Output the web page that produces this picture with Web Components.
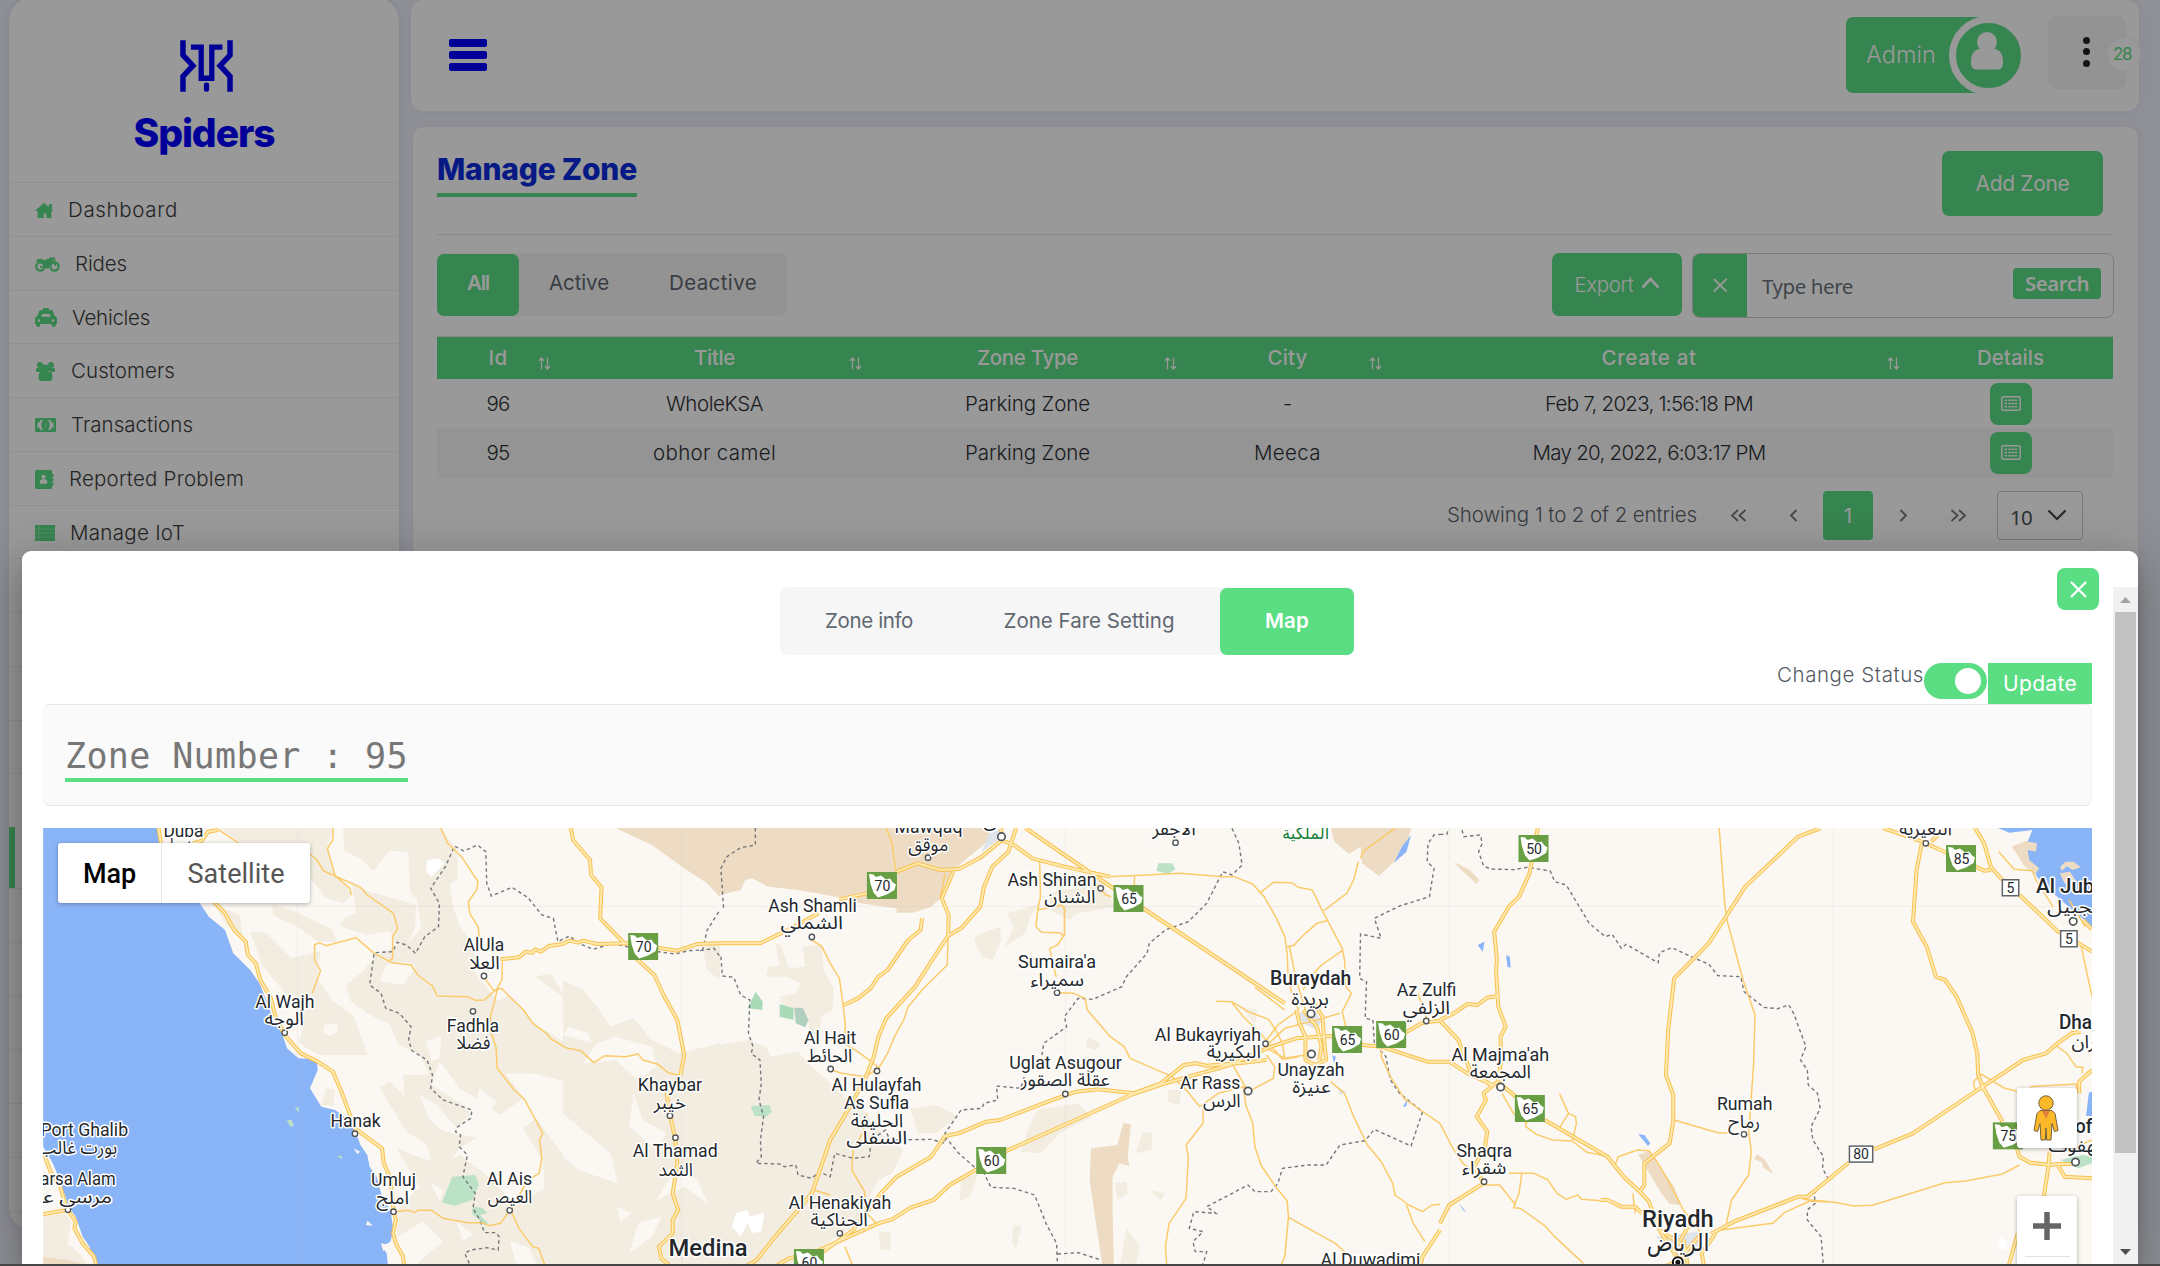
<!DOCTYPE html>
<html lang="en">
<head>
<meta charset="utf-8">
<title>Spiders - Manage Zone</title>
<style>
  html, body { margin: 0; height: 1266px; overflow: hidden; background: #eff1fb; }
  body { font-family: Inter, "Liberation Sans", sans-serif; font-size: 20.5px; font-weight: 300; color: #3a3f45; }
</style>
</head>
<body>
<spider-app></spider-app>
<script>
const GREEN = '#5bdd84';

function define(name, css, html, connected) {
  customElements.define(name, class extends HTMLElement {
    constructor() {
      super();
      this.attachShadow({ mode: 'open' });
    }
    connectedCallback() {
      if (this.shadowRoot.firstChild) return;
      const body = typeof html === 'function' ? html(this) : html;
      this.shadowRoot.innerHTML = `<style>*{box-sizing:border-box}:host{box-sizing:border-box}${css}</style>${body}`;
      if (connected) connected(this, this.shadowRoot);
    }
  });
}

/* Text that tracks its letters so that it takes exactly the width given in w. */
define('fit-text', `:host{display:inline-block;white-space:nowrap;line-height:1.2} span{display:inline-block}`,
  '<span><slot></slot></span>', (el, root) => {
    const w = +el.getAttribute('w');
    const span = root.querySelector('span');
    const natural = span.getBoundingClientRect().width;
    const n = el.textContent.length;
    if (w && natural) { span.style.letterSpacing = ((w - natural) / n) + 'px'; el.style.width = w + 'px'; }
  });

const ICONS = {
  home: [18, 15, '<path d="M9 0 14 4V1h3v5.5l1 1.2-1.6.6V15h-5v-4.500h-2.600V15H2.600V8.300L0 7.800z" fill="currentColor"/>'],
  bike: [25, 15, '<g fill="none" stroke="currentColor"><circle cx="5.300" cy="9.500" r="4.100" stroke-width="2.200"/><circle cx="19.500" cy="9.500" r="4.100" stroke-width="2.200"/><path d="M17 1.500h2.200L20.500 9M14.500 1.300h3.500" stroke-width="1.800"/></g><path d="M1.500 2.500 6 1.600l4 1.800 2-1.600h5l1.600 3.400-3.600 3-1.100 3.300H10L8.500 7.500 5 5.500 1.700 4.700zM5 9h6v1.800H5z" fill="currentColor"/>'],
  taxi: [22, 19, '<path fill-rule="evenodd" d="M8 0h6v2h2.200c1 0 1.500.5 1.800 1.400L19.500 8C21 8.300 22 9.400 22 11v5h-1.200v1.300c0 2.200-4 2.200-4 0V16H5.200v1.300c0 2.200-4 2.200-4 0V16H0v-5c0-1.600 1-2.700 2.500-3L4 3.400C4.300 2.500 4.800 2 5.800 2H8zM7.200 6 6.300 8.800h9.400L14.800 6zM4 11.200a1.300 1.300 0 1 0 .01 0zm14 0a1.300 1.300 0 1 0 .01 0z" fill="currentColor"/>'],
  users: [21, 19, '<g fill="currentColor"><circle cx="5" cy="3" r="3"/><circle cx="16" cy="3" r="3"/><circle cx="10.500" cy="6.500" r="4"/><path d="M2 6h6v4H3C.8 10 0 8 2 6zm17 0h-6v4h5c2.200 0 3-2 1-4zM6.500 9h8c2 .8 3 3 3 6.500 0 2.300-1 3.500-3 3.500h-8c-2 0-3-1.200-3-3.500C3.500 12 4.500 9.800 6.500 9z"/></g>'],
  money: [21, 14, '<rect width="21" height="14" rx="1" fill="currentColor"/><path d="M5 2.200h11a2.600 2.600 0 0 0 2.600 2.600v4.400A2.600 2.600 0 0 0 16 11.800H5a2.600 2.600 0 0 0-2.600-2.600V4.800A2.600 2.600 0 0 0 5 2.200z" fill="#fff"/><ellipse cx="10.500" cy="7" rx="4.200" ry="5.200" fill="currentColor"/><path d="M10.700 4.500v5" stroke="#fff" stroke-opacity=".6" stroke-width="1"/>'],
  book: [19, 19, '<path d="M2 0h13c1.500 0 2 .6 2 2v2h1.500v3H17v1.200h1.500v3H17v1.200h1.500v3H17V17c0 1.400-.5 2-2 2H2c-1.400 0-2-.6-2-2V2C0 .6.6 0 2 0z" fill="currentColor"/><circle cx="8.500" cy="6.800" r="2.100" fill="#fff"/><path d="M4.800 13.800v-1.600c0-3 1.800-2.900 3.700-2.900s3.700-.1 3.700 2.900v1.600z" fill="#fff"/>'],
  rack: [20, 16, '<path d="M0 0h20v16H0z" fill="currentColor"/><path d="M0 4h20M0 8h20M0 12h20M4 0v16" stroke="#fff" stroke-opacity=".35" stroke-width=".8"/>'],
  sort: [13, 13, '<path d="M3.500 12.500V1M1 3.800 3.500 1 6 3.800M9.500.5V12M7 9.200 9.500 12 12 9.200" fill="none" stroke="currentColor" stroke-width="1.300"/>'],
  list: [20, 15, '<rect x=".8" y=".8" width="18.400" height="13.400" rx="1.500" fill="none" stroke="currentColor" stroke-width="1.500"/><path d="M3.500 4.200H6m1.200 0h9.300M3.500 7.500H6m1.200 0h9.300M3.500 10.800H6m1.200 0h9.300" stroke="currentColor" stroke-width="1.500" stroke-dasharray="2.500 .7"/>'],
  up: [19, 12, '<path d="M1.500 10.500 9.500 2l8 8.500" fill="none" stroke="currentColor" stroke-width="2.600"/>'],
  down: [20, 12, '<path d="M1.500 1.500 10 10l8.500-8.500" fill="none" stroke="currentColor" stroke-width="2.200"/>'],
  x: [17, 17, '<path d="M1 1 16 16M16 1 1 16" fill="none" stroke="currentColor" stroke-width="2.300"/>'],
  first: [17, 13, '<path d="M8 1 2 6.500 8 12M15.500 1l-6 5.500 6 5.500" fill="none" stroke="currentColor" stroke-width="1.800"/>'],
  prev: [9, 13, '<path d="M7.500 1 2 6.500 7.500 12" fill="none" stroke="currentColor" stroke-width="1.800"/>'],
  next: [9, 13, '<path d="M1.500 1 7 6.500 1.500 12" fill="none" stroke="currentColor" stroke-width="1.800"/>'],
  last: [17, 13, '<path d="M1.500 1l6 5.500-6 5.500M9 1l6 5.500L9 12" fill="none" stroke="currentColor" stroke-width="1.800"/>'],
  person: [32, 38, '<circle cx="16" cy="10" r="10" fill="currentColor"/><path d="M8 17c-5 1-8 5.500-8 13 0 5 1.500 7.500 5.500 7.500h21c4 0 5.500-2.500 5.500-7.500 0-7.500-3-12-8-13z" fill="currentColor"/>']
};
define('ui-icon', ':host{display:inline-flex;flex:none} svg{display:block;overflow:visible}', el => {
  const [w, h, art] = ICONS[el.getAttribute('name')];
  const s = +(el.getAttribute('scale') || 1);
  return `<svg width="${w * s}" height="${h * s}" viewBox="0 0 ${w} ${h}">${art}</svg>`;
});

/* ---------- sidebar ---------- */
define('brand-logo', `:host{display:flex;flex-direction:column;align-items:center;flex:none;height:182px;padding:40px 0 0;color:#00f}
  svg{margin-left:5px;display:block} fit-text{font-size:39px;font-weight:800;line-height:47px;margin-top:17px;height:47px}`,
  `<svg width="53" height="52" viewBox="540 120 160 156"><g fill="none" stroke="currentColor"><path stroke-width="16.500" d="M549 120V165L579 197 549 229V276M691 120V165L661 197 691 229V276"/><path stroke-width="16" d="M573 141H604V235H636V141H668"/></g><rect x="612" y="248" width="16" height="28" rx="7" fill="currentColor"/></svg>
   <fit-text w="141">Spiders</fit-text>`);
define('nav-item', `:host{display:flex;align-items:center;gap:15px;height:53.75px;flex:none;padding:2px 0 0 26px;border-top:1px solid #f0f0f0;color:#3d3d3d}
  :host([active]){height:61px;border-left:6px solid ${GREEN};border-top:0} ui-icon{color:${GREEN}}`,
  el => el.hasAttribute('icon') ? `<ui-icon name="${el.getAttribute('icon')}"></ui-icon><fit-text w="${el.getAttribute('w')}">${el.textContent}</fit-text>` : '');
define('side-nav', `:host{display:flex;flex-direction:column;width:390px;height:1236px;margin-top:-4px;padding-top:4px;background:#fff;border-radius:26px;box-shadow:0 0 14px #d9dcea;overflow:hidden;flex:none}`,
  `<brand-logo></brand-logo>
   <nav-item icon="home" w="110">Dashboard</nav-item><nav-item icon="bike" w="52">Rides</nav-item>
   <nav-item icon="taxi" w="78">Vehicles</nav-item><nav-item icon="users" w="104">Customers</nav-item>
   <nav-item icon="money" w="122">Transactions</nav-item><nav-item icon="book" w="175">Reported Problem</nav-item>
   <nav-item icon="rack" w="115">Manage IoT</nav-item>` + '<nav-item></nav-item>'.repeat(5) + '<nav-item active></nav-item>' + '<nav-item></nav-item>'.repeat(7));

/* ---------- top bar ---------- */
define('user-chip', `:host{display:flex;align-items:center;width:183px;height:78px;margin-top:16px}
  .name{display:flex;align-items:center;width:140px;height:76px;background:${GREEN};border-radius:7px 0 0 7px;color:#fff;padding-left:20px;font-size:23.500px;flex:none}
  .ring{width:79px;height:79px;margin-left:-37px;border:7px solid #fff;border-radius:50%;background:${GREEN};color:#fff;display:flex;align-items:center;justify-content:center;padding:0 3px 8px 0;flex:none}`,
  '<div class="name"><fit-text w="70">Admin</fit-text></div><div class="ring"><ui-icon name="person"></ui-icon></div>');
define('more-button', `:host{display:flex;align-items:center;justify-content:center;position:relative;width:78px;height:73px;margin-top:16px;background:#f5f5f5;border-radius:8px}
  .dots{display:flex;flex-direction:column;gap:4.500px;margin:-2px 2px 0 0} i{width:7px;height:7px;border-radius:50%;background:#222}
  .badge{position:absolute;left:60px;top:22px;width:32px;height:32px;border-radius:50%;background:#fff;color:${GREEN};font-size:17px;font-weight:400;display:flex;align-items:center;justify-content:center;padding-right:4px;box-shadow:0 0 3px 1px #f1f6f3}`,
  '<div class="dots"><i></i><i></i><i></i></div><div class="badge"><fit-text w="18">28</fit-text></div>');
define('top-bar', `:host{display:flex;justify-content:space-between;width:1728px;height:111px;background:#fff;border-radius:12px;padding:0 13px 0 38px;box-shadow:0 0 10px #e2e5f1}
  .burger{display:flex;flex-direction:column;gap:4px;margin-top:39px} .burger i{width:38px;height:8px;border-radius:2px;background:#00f}
  .right{display:flex;gap:19px}`,
  '<div class="burger"><i></i><i></i><i></i></div><div class="right"><user-chip></user-chip><more-button></more-button></div>');

/* ---------- shared controls ---------- */
define('tab-strip', `:host{display:flex;background:#f6f6f6;border-radius:7px;width:max-content;font-weight:400;color:#5f6771;padding-top:1px}
  div{display:flex;align-items:center;justify-content:center;height:100%;border-radius:7px;padding-bottom:var(--lift,0)} .on{background:${GREEN};color:#fff;font-weight:600}`,
  el => JSON.parse(el.getAttribute('tabs')).map(([t, w, box, on]) => `<div class="${on ? 'on' : ''}" style="width:${box}px"><fit-text w="${w}">${t}</fit-text></div>`).join(''));
define('solid-button', `:host{display:flex;align-items:center;justify-content:center;background:${GREEN};color:#fff;border-radius:7px;flex:none}`, '<slot></slot>');

/* ---------- table ---------- */
define('search-box', `:host{display:flex;align-items:center;width:422px;height:65px;border:1px solid #ccc;border-radius:8px;overflow:hidden;font-family:"Noto Sans","Open Sans",sans-serif;font-weight:400;color:#6c757d;padding-right:12px}
  .clear{width:54px;height:100%;background:${GREEN};color:#fff;display:flex;align-items:center;justify-content:center;margin-right:15px}
  .ph{flex:1;padding-top:1px} solid-button{width:88px;height:31px;border-radius:4px;font-weight:600;margin-top:-4px}`,
  '<div class="clear"><ui-icon name="x" scale=".85"></ui-icon></div><div class="ph"><fit-text w="91">Type here</fit-text></div><solid-button><fit-text w="64">Search</fit-text></solid-button>');
const COLS = [['Id', 19, 122], ['Title', 41, 311], ['Zone Type', 101, 315], ['City', 40, 205], ['Create at', 95, 518], ['Details', 67, 205]];
define('zone-table', `:host{display:block;width:1676px;border-top:1px solid #e4e4e4}
  .row{display:grid;grid-template-columns:${COLS.map(c => c[2] + 'px').join(' ')};height:49px;color:#2d3035}
  .row.alt{background:#f7f7f7;height:50px}
  .row.head{height:42px;background:${GREEN};color:#fff;font-weight:500}
  .cell{display:grid;align-items:center;justify-items:center} .cell>*{grid-area:1/1}
  .cell>ui-icon[name=sort]{justify-self:end;margin:11px 8px 0 0}
  .row.first{padding-top:1px}
  solid-button{width:42px;height:42px;border-radius:8px;margin-top:-1px}`,
  () => {
    const rows = [
      [['96', 23], ['WholeKSA', 97], ['Parking Zone', 125], ['-', 9], ['Feb 7, 2023, 1:56:18 PM', 208]],
      [['95', 23], ['obhor camel', 123], ['Parking Zone', 125], ['Meeca', 67], ['May 20, 2022, 6:03:17 PM', 233]]
    ];
    return `<div class="row head">${COLS.map(([t, w], i) => `<div class="cell"><fit-text w="${w}">${t}</fit-text>${i < 5 ? '<ui-icon name="sort"></ui-icon>' : ''}</div>`).join('')}</div>` +
      rows.map((r, i) => `<div class="row ${i ? 'alt' : 'first'}">${r.map(([t, w]) => `<div class="cell"><fit-text w="${w}">${t}</fit-text></div>`).join('')}<div class="cell"><solid-button><ui-icon name="list"></ui-icon></solid-button></div></div>`).join('');
  });
define('page-nav', `:host{display:flex;align-items:center;justify-content:flex-end;height:49px;margin:13px 31px 0 0;color:#5d646c}
  ui-icon{color:#777} .s{width:33px} solid-button{width:50px;height:49px;border-radius:4px;margin:0 26px 0 25px;font-weight:400}
  .sel{display:flex;align-items:center;justify-content:space-between;width:86px;height:49px;border:1px solid #c8c8c8;border-radius:4px;padding:4px 15px 0 12px;margin-left:30px;font-family:"Noto Sans",sans-serif;font-weight:400;color:#495057} .sel ui-icon{color:#444;margin-top:-6px}`,
  `<fit-text w="250">Showing 1 to 2 of 2 entries</fit-text><i class="s"></i><ui-icon name="first"></ui-icon><i style="width:42px"></i><ui-icon name="prev"></ui-icon><solid-button>1</solid-button><ui-icon name="next"></ui-icon><i style="width:42px"></i><ui-icon name="last"></ui-icon><div class="sel"><fit-text w="22">10</fit-text><ui-icon name="down"></ui-icon></div>`);
define('zone-page', `:host{display:block;width:1725px;height:1105px;margin:16px 0 0 2px;background:#fff;border-radius:10px;padding:24px 24px 0;box-shadow:0 0 10px #e2e5f1}
  header{display:flex;justify-content:space-between;height:84px;border-bottom:1px solid #e3e3e3;padding-right:11px;width:1677px}
  h1{margin:0;height:46px;border-bottom:4px solid ${GREEN};font-size:30px;font-weight:800;color:#0a2bdd} h1 fit-text{line-height:37px}
  .add{width:161px;height:65px;font-weight:400;font-size:21px}
  .tools{display:flex;align-items:flex-start;height:101px;padding-top:18px}
  tab-strip{height:63px} .export{width:130px;height:63px;gap:7px;margin:0 10px 0 auto}`,
  `<header><h1><fit-text w="200">Manage Zone</fit-text></h1><solid-button class="add"><fit-text w="94">Add Zone</fit-text></solid-button></header>
   <div class="tools"><tab-strip style="--lift:3px" tabs='[["All",22,82,1],["Active",60,120],["Deactive",88,148]]'></tab-strip>
   <solid-button class="export"><fit-text w="59" style="margin-top:2px">Export</fit-text><ui-icon name="up" style="margin-top:-4px"></ui-icon></solid-button><search-box></search-box></div>
   <zone-table></zone-table><page-nav></page-nav>`);

/* ---------- map ---------- */
/* Geometry is kept in survey sheets: 0-2 are 720px wide slices of the map, 3 is the detailed west coast. */
const SX = 720 / 1568, SY = 1 / 3;
const px = (p, x) => p * 720 + x * SX, py = y => 780 + y * SY;
const sheet = p => p === 3 ? 'translate(43 828) scale(.33333)' : `translate(${p * 720} 780) scale(${SX} ${SY})`;
const AREAS = [
  [3, '#f2ede0', 'M530 0H870L852 60 875 140 930 200 900 225 850 210 800 150V45H590ZM900 0H1190L1240 60 1246 150 1220 170 1232 240 1252 300 1292 345 1300 440 1365 520 1400 500 1440 540 1480 590 1560 640V760L1480 738 1385 735 1420 780 1440 812 1370 860 1330 830 1250 780 1190 700 1165 770 1260 830 1283 860 1240 900 1180 830 1130 800 1160 880 1222 930 1180 950 1090 870 1080 740 1160 740 1130 680 1065 650 1040 590 980 560 922 520 910 470 960 430 1000 380 1100 340 1135 300 1120 210 1100 190 1096 72 1040 68 990 130 950 90 905 70ZM925 160 975 190 1030 205 1120 230 1115 300 1090 355 1060 350 1040 310 970 320 890 295 905 270 940 255ZM515 230 590 260 600 335 550 290ZM688 228 760 252 870 305 880 342 820 340 770 300 690 262ZM620 310 670 315 745 390 832 370 822 450 870 520 930 560 975 682 830 682 765 645 780 600 740 510 655 410 640 360Z'],
  [3, '#f2ede0', 'M1010 780 1040 758 1110 830 1200 910 1300 930 1250 960 1215 1010 1170 1010 1150 950 1090 910 1040 830ZM1060 960 1120 985 1200 1012 1250 980 1330 1040 1420 1130 1505 1080 1500 1000 1440 900 1480 870 1560 980V1308H1120L1200 1240 1140 1180 1060 1230 1070 1130 1130 1080ZM850 780 875 785 872 835 835 830Z'],
  [3, '#fbf8f3', 'M1010 460 1080 470 1120 420 1090 400 1030 410ZM1150 640 1195 625 1190 690 1165 700ZM845 590 880 585 885 610 860 625 842 612ZM1310 780 1360 820 1340 850 1300 815ZM1160 1060 1200 1090 1190 1120ZM1420 1040 1450 1080 1420 1100ZM1240 1180 1290 1220 1260 1240ZM1400 1240 1460 1260 1480 1308H1420ZM1430 350 1480 380 1520 470 1440 440Z'],
  [0, '#f2ede0', 'M1165 590 1200 580 1225 640 1226 600 1270 630 1300 680 1330 740 1380 715 1420 780 1480 820 1568 790V1460H1226V650ZM1530 500 1568 490V600L1540 570Z'],
  [0, '#fbf8f3', 'M1226 1000 1260 1040 1330 1120 1345 1210 1260 1170 1226 1130ZM1340 770 1420 800 1430 860 1390 900 1340 840 1270 850 1300 790ZM1380 940 1400 1020 1450 1060 1430 1110 1370 1040ZM1470 1170 1520 1200 1540 1270 1490 1220 1430 1260ZM1345 1280 1375 1300 1350 1325ZM1390 1330 1440 1310 1420 1370 1370 1420ZM1240 740 1280 760 1290 790 1226 765Z'],
  [0, '#fff', 'M930 240 955 235 968 250 940 290 928 275Z'],
  [0, '#eddcc3', 'M1340 144H1568V352L1540 310 1490 265 1420 195Z'],
  [0, '#8ab4f8', 'M94 144H345L355 240 435 370 455 410 490 450 508 520 545 570 565 610 580 660 595 720 614 760 625 805 650 835 690 838 692 870 675 925 700 980 730 990 760 1020 775 1060 785 1095 800 1125 805 1160 820 1190 832 1250 850 1290 857 1350 850 1385 832 1400 842 1420 845 1460H210L195 1400 180 1370 165 1310 150 1280 130 1200 115 1150 94 1100Z'],
  [0, '#f2ede0', 'M94 1312 140 1300 155 1325 147 1390 175 1425 195 1460H94Z'],
  [0, '#eddcc3', 'M94 1430 150 1441 190 1455V1460H94Z'],
  [0, '#fbf8f3', 'M800 1322 812 1337 797 1335ZM830 1390 858 1398 834 1412ZM770 1105 784 1115 778 1122Z'],
  [0, '#bbe2c6', 'M985 1190 1035 1185 1043 1215 1028 1260 990 1277 962 1268ZM1030 1280 1050 1283 1062 1300 1045 1305 1063 1330 1055 1335 1040 1315 1027 1300ZM625 1020 635 1020 640 1038 632 1040ZM642 985 650 980 651 997ZM733 1127 744 1128 745 1138Z'],
  [1, '#f2ede0', 'M0 795 60 780 100 800 110 830 170 815 200 860 240 910 275 960 320 1000 350 1060 400 1110 375 1180 345 1200 330 1240 300 1330 220 1400 150 1460H0ZM120 490 133 495 150 565 185 560 180 500 222 492 225 570 247 620 246 690 220 710 215 790 190 780 195 730 145 700 130 650 165 640 175 610 145 590 100 590 105 560 130 555ZM560 465 610 440 612 480 595 540 570 530 553 480ZM625 400 700 370 675 410 665 460 620 500 640 440ZM715 340 790 320 830 300 860 380 780 400 760 420 720 390ZM690 990 780 970 810 1010 740 1060 700 1120 655 1115 670 1050ZM415 985 470 975 520 1010 470 1060 430 1060ZM800 770 830 790 820 810 797 800ZM975 930 1005 930 1000 975 975 965ZM920 1055 942 1060 940 1110 905 1120ZM860 1210 885 1205 888 1240 865 1260ZM935 1230 970 1240 960 1260ZM885 1345 915 1400 905 1460H870ZM640 1335 657 1340 645 1405 635 1390ZM345 1355 372 1355 370 1410 350 1410ZM525 1200 562 1180 545 1250 522 1265ZM1135 680 1170 690 1165 735Z'],
  [1, '#eddcc3', 'M0 144H595L578 190 525 250 492 310 480 355 460 380 420 398H385L384 385 305 370 270 355 170 330 105 320 70 295 55 300 45 330 0 345ZM878 1030 895 1032 888 1130 892 1158 870 1150 855 1190 855 1300 858 1460H833L820 1340 805 1200 808 1105 865 1095ZM1330 144H1505L1492 215 1435 288 1398 250 1395 200 1370 222 1338 185Z'],
  [1, '#8ab4f8', 'M1505 165 1495 215 1468 248 1485 200ZM1333 825 1341 830 1338 852ZM1497 958 1495 978 1487 982Z'],
  [1, '#bbe2c6', 'M955 250H985L992 268 975 282 950 272ZM67 978 108 975 113 995 100 1010 75 1008Z'],
  [1, '#a9dbb9', 'M78 635 93 665 92 690 60 685ZM130 672 160 685 160 720 130 710Z'],
  [1, '#b1cfbf', 'M162 683 180 683 193 720 185 742 165 730Z'],
  [1, '#fff', 'M35 1300 60 1290 65 1310 97 1298 90 1355 70 1358 60 1330 45 1370 26 1340Z'],
  [1, '#dfe3ea', 'M1255 700 1290 690 1310 720 1300 750 1270 730ZM1345 925 1365 935 1350 945ZM590 150H612V175L570 215Z'],
  [2, '#8ab4f8', 'M1215 144H1420V440L1395 410 1360 370 1320 320 1300 290 1285 250 1275 200 1290 150 1240 158ZM82 495 97 485 93 515ZM144 525 152 530 154 563 147 560ZM432 1063 445 1065 458 1090 453 1098ZM42 1270 57 1297 50 1290ZM1413 938 1420 935V1008H1407Z'],
  [2, '#eddcc3', 'M1245 200 1275 183 1300 190 1298 215 1280 210 1283 240 1305 265 1295 285 1270 255 1258 225ZM1350 262 1362 245 1380 245 1395 262 1378 270 1365 258 1355 272ZM1350 280 1372 275 1388 310 1360 310ZM30 245 65 270 86 300 80 312 50 275ZM432 1125 455 1112 470 1140 510 1220 525 1275 500 1272 480 1235ZM690 1122 708 1140 726 1182 705 1165 700 1145 684 1138Z'],
  [2, '#bbe2c6', 'M1350 1140 1400 1125 1420 1130V1150L1390 1165Z'],
  [2, '#dfe3ea', 'M470 1370 560 1355 570 1400 540 1440 500 1410ZM1370 1150 1395 1145 1390 1160Z'],
  [2, '#fff', 'M1218 1370 1237 1385 1230 1410 1215 1405Z']
];
const MINOR = [
  [0, 'M725 144 725 180 713 205 730 288 762 325 765 345M675 222 690 240 705 273 730 288 785 322 800 345 857 400 866 445 855 470 855 535 848 543M680 640 698 572 685 540 685 495 695 488 710 497 775 473 815 520 853 548 895 555 910 585 942 618 952 648 1018 650 1035 661 1055 660 1083 625 1093 600 1094 545M475 148 520 190M960 144 975 190 1005 230 1041 305 1038 330 1020 365 1023 400 1041 440 1045 490M1056 595 1075 632 1092 625 1110 650 1140 690 1160 730 1190 760 1200 777 1232 803 1265 812 1293 848 1317 827 1362 830 1390 822 1400 840 1433 853 1455 878 1480 886M1083 628 1075 675 1068 710 1070 760 1080 800 1083 865 1120 930 1142 957 1182 1060 1175 1080 1180 1135 1174 1180 1150 1200 1112 1290 1130 1345 1160 1400 1173 1405 1188 1460M860 1295 890 1291 903 1298 910 1291 940 1291 965 1315 1020 1328 1050 1328 1065 1337 1090 1330 1110 1292'],
  [1, 'M362 144 375 190 383 275M200 480 222 500 240 550 260 595 268 675 273 735 270 790 300 815 342 858 340 870 315 890 265 880 243 870M696 240 698 350 692 390 688 440 700 457 740 458 748 468 735 495 718 505 724 545 732 590M750 380 750 465 748 468M690 390 745 375 752 395M810 300 840 345 852 350M845 290 930 285 1000 280 1050 285 1095 290 1120 290 1160 312 1185 350 1210 410 1230 470 1235 520 1237 580 1245 640 1260 690M1175 340 1205 307 1245 308 1260 322 1290 330 1313 395 1355 505 1360 540 1363 620 1375 640 1355 695M1250 495 1275 460 1300 430 1322 422M1235 500 1253 495M1390 245 1380 300 1365 340 1315 392M1355 512 1310 555 1280 600 1270 630M1395 235 1400 215 1470 145M903 285 902 315M497 450 495 555 440 630 410 680 400 720 380 770 365 820 345 865M490 280 480 355M735 638 770 640 795 655 800 690 850 770 880 800 893 835 985 890 1012 925 1045 980 1085 940 1140 920 1145 975 1160 1030 1165 1100 1178 1155 1210 1220 1235 1262 1238 1310 1230 1430 1220 1460M1052 980V1030L1015 1095 1020 1130 1015 1255 978 1330 970 1400 973 1460M1115 850 1150 935 1205 895 1208 860 1190 825M1080 664 1115 665 1150 695 1195 718 1210 750 1225 790 1230 838M1165 622 1230 690M1115 668 1140 710 1180 765 1225 838 1260 830M1188 785 1215 735 1260 690M1195 790 1230 745 1300 720 1350 700M1185 800 1230 835 1275 825M1330 905 1360 940 1380 1010 1410 1095 1440 1145 1465 1210 1470 1245 1500 1275 1530 1295 1550 1275 1568 1273M1440 810V830L1460 890 1490 955 1525 990 1568 1030M1495 1275 1510 1330 1535 1385M1238 1312 1340 1390 1380 1440M1355 695 1362 735 1355 760M320 1000 310 1060 290 1110 287 1170 315 1235 317 1295 340 1330M272 1400 290 1460M205 1230 240 1245M1520 640 1540 720M1240 500 1255 600 1275 690'],
  [2, 'M608 144 620 370 625 420 660 600 686 705 683 850 675 1010 672 1050 678 1115 672 1185 635 1260 622 1340M510 1020 605 1058 650 1060M1217 215 1250 268 1290 272 1300 305 1335 380M1395 490 1420 650M1165 930 1162 905 1178 882 1200 900 1230 925 1260 935M1285 920 1385 912 1388 935M1340 795 1365 820 1385 860 1400 862 1398 880M0 1030 30 1110 50 1150 72 1175M187 1030 187 1040 210 1063 245 1080 288 1083 320 1117 370 1130M260 940 280 1000 262 1040M280 1000 295 1010 297 1030 288 1083M135 940 160 1000 190 1030M150 1180 205 1180 235 1200 255 1240 275 1258 300 1245 308 1258 350 1262M178 1182 172 1240 160 1283 175 1285 228 1337 250 1370 312 1450M95 1215 130 1215 165 1275M420 1240 425 1300M380 1160 388 1130 430 1110 455 1112 475 1150 500 1210 530 1290 568 1358M612 1350 725 1330 750 1298 805 1263 860 1267 900 1278 942 1276 1100 1208 1145 1203 1225 1182 1262 1155M790 1258 850 1265M1385 1100 1420 1080M1370 360 1405 440']
];
const MAJOR = [
  [0, 'M345 144 352 200 360 250 440 330 490 400 510 450 535 485 540 525 557 550 567 600 590 655 600 710 620 765 655 820 692 845 725 875 745 940 773 1045 832 1105 836 1150 850 1195 857 1290 862 1320 856 1360 862 1390 878 1430 880 1460M420 190 440 182 453 155 475 150M1243 144 1248 180 1285 240 1287 285 1310 322 1307 415 1360 490M1090 538 1130 532 1145 515 1160 518 1165 508 1178 515 1195 498 1225 492 1240 482 1260 488 1270 482 1300 492 1368 490 1475 512 1520 492 1568 490M1385 535 1425 585 1445 645 1475 720 1490 825 1482 885M1450 920 1458 1000 1470 1072 1475 1150 1465 1240 1477 1290 1465 1320V1360L1435 1400 1440 1435 1460 1460M94 1115 110 1175 130 1215 145 1285 165 1325 162 1345 180 1390 205 1430 210 1460M94 1303 145 1290'],
  [1, 'M0 490H87L140 455 215 400M260 358 320 340M385 275 430 250 480 270 520 267 565 235 615 180M612 144 615 182 640 195 680 235 750 260 850 290M665 144 830 300 1230 670M645 144 628 215 593 260 575 320 567 380 525 445 497 467 455 555 425 620 362 715 345 770 335 830 315 900 270 1010 240 1080 215 1180 200 1240 170 1290 120 1370 80 1440 55 1460M508 275 483 355 498 405 497 465M440 415 437 450 410 480 365 570 345 590 328 625 300 655 270 675M490 1068 520 1060 580 1025 610 1020 720 962 775 935 825 928 900 940 960 910 1010 855 1035 850 1060 857 1140 848 1190 840M120 1460 150 1435 200 1420 345 1330 375 1318 415 1283 465 1260 500 1215 560 1168M620 1115 900 942 965 912 1110 855 1200 800 1255 775 1330 768 1400 795 1440 800 1540 845H1568M225 1415 290 1350 350 1240 385 1190 460 1130 490 1068M1255 690 1262 730 1275 770V840L1295 855 1320 840 1315 770 1312 710 1290 660M1270 690 1300 740 1310 800 1305 840M1490 760 1530 728 1568 722M1568 1350 1530 1430 1525 1460'],
  [2, 'M213 144 195 280 172 350 150 380 118 455 124 540 122 570 127 680 143 740 132 770V850L125 910M0 720 30 700 60 672 82 675 103 653 127 648M0 722 40 780 65 870 115 920M0 845H20L60 880 115 915M125 905 95 940 100 960 80 1010 103 1055 98 1100 75 1160 95 1210 20 1275 0 1330M125 905 170 955M228 1020 365 1130 400 1190 435 1235 455 1265 480 1355 520 1440M435 1235 445 1215 445 1150 500 1090 508 1025V945L492 885 497 750 510 595 585 490 665 320 780 170 828 145M350 1260 365 1260 395 1280H425L440 1300M965 144 1050 185 1090 210 1170 262 1185 272 1200 270M1070 185 1095 150M1165 144 1185 190 1200 262 1225 300M1050 185 1038 270 1030 425 1060 500 1080 590 1100 600 1125 650 1160 760 1170 820 1172 885 1182 920 1225 1025M1262 345 1350 460M1385 485 1420 515M1400 420 1420 448M945 1108 1030 1060 1182 920 1270 840 1320 820 1345 790 1375 760 1395 755M890 1148 840 1205 800 1250 780 1250 640 1325 590 1362M1255 1100 1262 1130 1285 1148 1330 1155 1345 1152 1375 1152M1345 1152 1360 1190 1420 1195M1328 1110 1325 1160 1315 1250M1258 1360 1238 1460M1420 870 1392 905V940M490 1460 520 1440 570 1360M480 1350 520 1390 540 1340M540 1460 530 1380M575 1460 570 1420 600 1360']
];
const BORDERS = [
  [0, 'M1022 1450 1012 1420 1025 1410 1060 1403 1085 1410 1087 1370 1080 1358 1055 1358 1045 1320 1030 1285 1035 1240 1008 1190 1018 1125 1000 1100 1003 1065 992 1055 997 1040 1025 1015 1028 990 965 960 938 925 942 885 930 840 897 812 890 780 895 740 870 700 840 685 830 640 805 615 815 518 855 515 865 487 885 495 905 520 925 470 955 440 957 370 938 325 970 260 990 198 1010 213 1040 195 1058 215 1060 310 1070 348 1115 322 1150 353 1180 405 1205 415 1215 485 1240 468 1260 490 1292 508 1335 490 1380 505 1470 522 1500 512 1530 510 1540 450 1568 390'],
  [0, 'M1525 512 1555 505 1568 530'],
  [1, 'M77 144V195L45 203 15 230 2 265 8 390M2 530 5 588 30 592 45 645 65 660 62 760 72 800 68 820 87 840 90 910 85 960 95 1010 88 1080 90 1130 78 1150 130 1152 140 1160 165 1155 170 1185 200 1195 215 1175 240 1190 250 1120 290 1135 325 1130 330 1080 360 1050 370 1080 460 1078 490 1090 490 1060 525 990 570 985 575 970 605 960 602 918 655 925 665 880 700 835 705 790 755 740 750 710 780 655 812 658 875 620 885 590 930 520 935 490 970 450 1020 425 1060 370 1095 275 1115 285 1137 255 1130 190 1115 145M490 1070 520 1120 557 1165 575 1180 590 1222 640 1225 685 1245 710 1330 733 1390 735 1460M735 1422 780 1418 830 1440M1050 1460 1060 1415 1035 1415 1030 1385 1052 1355 1022 1345 1032 1295 1080 1300 1060 1280 1150 1215 1165 1235 1200 1235 1215 1210 1225 1165 1280 1155 1320 1155 1350 1095 1405 1082 1425 1048 1505 1098 1530 995 1480 940 1460 900 1450 830 1425 790 1422 720 1405 715 1408 605 1393 595 1395 462 1440 475 1425 415 1480 378 1545 350 1555 265 1540 245 1542 190 1555 165 1568 163'],
  [2, 'M0 163 15 163 18 147M48 150 52 170 88 165 92 190 84 215 95 258 110 267 160 269 190 262 240 273 250 305 275 315 325 430 360 470 375 463 395 505 405 493 475 548 478 518 505 503 555 535 585 552 605 587 655 590 662 635 705 682 735 686 760 675 770 700 797 800 785 840 800 870 802 915 822 940 828 985 808 1040 812 1080 835 1130 833 1165 845 1195 815 1240 817 1270 800 1290 800 1320 830 1370 835 1460']
];
/* sheet, left, right, baseline, text, kind: c city, b big city, a arabic, g green */
const LABELS = [
  [0, 356, 443, 172, 'Duba'], [0, 370, 420, 214, 'ضبا', 'a'], [0, 1010, 1098, 514, 'AlUla'], [0, 1022, 1088, 566, 'العلا', 'a'],
  [0, 556, 685, 684, 'Al Wajh'], [0, 576, 662, 735, 'الوجه', 'a'], [0, 973, 1087, 756, 'Fadhla'], [0, 994, 1068, 806, 'فضلا', 'a'],
  [0, 1389, 1529, 932, 'Khaybar'], [0, 1424, 1494, 988, 'خيبر', 'a'], [0, 1378, 1563, 1132, 'Al Thamad'], [0, 1434, 1509, 1187, 'الثمد', 'a'],
  [0, 720, 829, 1040, 'Hanak'], [0, 88, 279, 1068, 'Port Ghalib'], [0, 84, 255, 1122, 'بورت غالب', 'a'],
  [0, 56, 252, 1214, 'Marsa Alam'], [0, 52, 244, 1268, 'مرسى علم', 'a'], [0, 808, 906, 1217, 'Umluj'], [0, 820, 891, 1272, 'املج', 'a'],
  [0, 1060, 1159, 1215, 'Al Ais'], [0, 1062, 1159, 1270, 'العيص', 'a'], [0, 1456, 1628, 1427, 'Medina', 'b'],
  [1, 380, 528, 158, 'Mawqaq'], [1, 410, 497, 212, 'موقق', 'a'], [1, 573, 660, 142, 'حائل', 'a'], [1, 105, 298, 396, 'Ash Shamli'], [1, 132, 268, 448, 'الشملي', 'a'],
  [1, 626, 820, 318, 'Ash Shinan'], [1, 706, 818, 370, 'الشنان', 'a'], [1, 942, 1036, 165, 'الأجفر', 'a'], [1, 1224, 1327, 178, 'الملكية', 'g'],
  [1, 649, 819, 564, "Sumaira'a"], [1, 676, 793, 618, 'سميراء', 'a'], [1, 1198, 1375, 615, 'Buraydah', 'c'], [1, 1244, 1326, 675, 'بريدة', 'a'],
  [1, 1474, 1604, 648, 'Az Zulfi'], [1, 1487, 1590, 703, 'الزلفي', 'a'], [1, 947, 1178, 784, 'Al Bukayriyah'], [1, 1060, 1178, 835, 'البكيرية', 'a'],
  [1, 1214, 1360, 887, 'Unayzah'], [1, 1246, 1330, 940, 'عنيزة', 'a'], [1, 1002, 1133, 927, 'Ar Rass'], [1, 1052, 1134, 980, 'الرس', 'a'],
  [1, 630, 875, 867, 'Uglat Asugour'], [1, 655, 849, 918, 'عقلة الصقور', 'a'], [1, 183, 297, 793, 'Al Hait'], [1, 190, 288, 846, 'الحائط', 'a'],
  [1, 243, 439, 933, 'Al Hulayfah'], [1, 270, 412, 987, 'As Sufla'], [1, 285, 399, 1040, 'الحليفة', 'a'], [1, 275, 408, 1092, 'السفلى', 'a'],
  [1, 149, 373, 1287, 'Al Henakiyah'], [1, 197, 322, 1338, 'الحناكية', 'a'], [1, 1308, 1525, 1457, 'Al Duwadimi'],
  [2, 1000, 1115, 165, 'النعيرية', 'a'], [2, 1298, 1472, 340, 'Al Jubail', 'c'], [2, 1322, 1445, 400, 'الجبيل', 'a'],
  [2, 1348, 1502, 748, 'Dhahran', 'c'], [2, 1375, 1500, 803, 'الظهران', 'a'], [2, 1355, 1457, 1060, 'Hofuf', 'c'], [2, 1325, 1450, 1115, 'الهفوف', 'a'],
  [2, 25, 238, 842, "Al Majma'ah"], [2, 65, 198, 893, 'المجمعة', 'a'], [2, 603, 724, 989, 'Rumah'], [2, 628, 697, 1045, 'رماح', 'a'],
  [2, 36, 157, 1130, 'Shaqra'], [2, 48, 145, 1183, 'شقراء', 'a'], [2, 440, 596, 1342, 'Riyadh', 'b'], [2, 450, 587, 1412, 'الرياض', 'A']
];
const TOWNS = [[0, 1054, 588], [0, 620, 758], [0, 1030, 694], [0, 1459, 1007], [0, 1471, 1073], [0, 773, 1061], [0, 148, 1289], [0, 857, 1295], [0, 1110, 1291],
  [1, 453, 233], [1, 613, 170, 1], [1, 200, 471], [1, 829, 325], [1, 992, 188], [1, 734, 638], [1, 1287, 701, 1], [1, 1538, 723], [1, 1188, 791], [1, 1288, 822, 1], [1, 1150, 933, 1],
  [1, 752, 942], [1, 241, 867], [1, 342, 873], [1, 261, 1360], [2, 1058, 190], [2, 1379, 424, 1], [2, 1384, 1146, 1], [2, 132, 921, 1], [2, 662, 1063], [2, 96, 1205]];
const SHIELDS = [[0, 1368, 459, 70], [1, 320, 276, 70], [1, 857, 315, 65], [1, 1333, 738, 65], [1, 1429, 723, 60], [1, 558, 1101, 60], [1, 161, 1407, 60],
  [2, 171, 165, 50], [2, 1102, 195, 85], [2, 163, 945, 65], [2, 1204, 1027, 75]];
const PLATES = [[2, 1223, 297, 39, 5], [2, 1350, 450, 39, 5], [2, 890, 1096, 54, 80]];

const layer = (list, attrs) => list.map(([p, d]) =>
  `<path transform="${sheet(p)}" vector-effect="non-scaling-stroke" d="${d}" fill="none" ${attrs}/>`).join('');
define('map-canvas', `:host{display:block;grid-area:1/1} svg{display:block} text{font-family:Roboto,sans-serif;font-weight:400;fill:#24282c;paint-order:stroke;stroke:#fff;stroke-width:3px;stroke-linejoin:round}
  .a{font-family:"Noto Sans Arabic","Noto Sans","DejaVu Sans",sans-serif;font-size:18.500px} .A{font-family:"DejaVu Sans",sans-serif;font-size:24px} .g{font-family:"DejaVu Sans",sans-serif;font-size:17px;fill:#188038} .t{font-size:18px} .c{font-size:19.500px;font-weight:500} .b{font-size:24px;font-weight:500} .n{font-size:14px;stroke:none}`,
  () => {
    let s = '<rect x="43" y="828" width="2049" height="436" fill="#fbf8f3"/>';
    s += AREAS.map(([p, f, d]) => `<path transform="${sheet(p)}" d="${d}" fill="${f}"/>`).join('');
    s += '<path d="M43 906.500H2092M297.500 828V1264M681.500 828V1264M1065.500 828V1264M1449.500 828V1264M1833.500 828V1264" stroke="#999" stroke-opacity=".1"/>';
    s += layer(BORDERS, 'stroke="#74777c" stroke-width="1.400" stroke-dasharray="3.500 3"');
    s += layer(MINOR, 'stroke="#fbcb6b" stroke-width="1.500" stroke-linejoin="round"');
    s += layer(MAJOR, 'stroke="#f9c04e" stroke-width="4" stroke-linejoin="round"');
    s += layer(MAJOR, 'stroke="#fee9ae" stroke-width="2" stroke-linejoin="round"');
    s += SHIELDS.map(([p, x, y, n]) => `<g transform="translate(${px(p, x)} ${py(y)})"><rect width="30" height="27" fill="#689f45"/><path d="M2 2 6.500 2.500 9 5 14 3.500 19 7.500 23 6.500 26 10.500 29 12.500 27.500 18 20 22.500 11 25.500 6.500 20.500 3.500 11.500Z" fill="#fff"/><text class="n" x="15.500" y="19" text-anchor="middle">${n}</text></g>`).join('');
    s += PLATES.map(([p, x, y, w, n]) => `<g transform="translate(${px(p, x)} ${py(y)})"><rect x=".75" y=".75" width="${w * SX - 1.5}" height="16" fill="#fff" stroke="#5f6368" stroke-width="1.500"/><text class="n" x="${w * SX / 2}" y="13.700" text-anchor="middle">${n}</text></g>`).join('');
    s += TOWNS.map(([p, x, y, big]) => `<circle cx="${px(p, x)}" cy="${py(y)}" r="${big ? 3.7 : 2.7}" fill="#fff" stroke="#50555a" stroke-width="${big ? 1.7 : 1.4}"/>`).join('');
    s += `<circle cx="${px(2, 518)}" cy="${py(1447)}" r="5" fill="#fff" stroke="#111" stroke-width="2"/><circle cx="${px(2, 518)}" cy="${py(1447)}" r="2.500" fill="#111"/>`;
    s += LABELS.map(([p, x0, x1, y, t, k]) => `<text class="${k || 't'}" x="${px(p, (x0 + x1) / 2)}" y="${py(y)}" text-anchor="middle" textLength="${(x1 - x0) * SX}" lengthAdjust="spacingAndGlyphs">${t}</text>`).join('');
    return `<svg width="2049" height="436" viewBox="43 828 2049 436">${s}</svg>`;
  });
define('map-type', `:host{display:flex;grid-area:1/1;z-index:1;width:252px;height:60px;margin:15px 0 0 15px;background:#fff;border-radius:3px;box-shadow:0 1px 4px rgba(0,0,0,.3);font:400 27px Roboto,sans-serif;color:#565656}
  div{display:flex;align-items:center;justify-content:center;width:148px;padding-top:2px} .on{width:104px;font-weight:500;color:#000;border-right:1px solid #e6e6e6}`,
  '<div class="on"><fit-text w="53">Map</fit-text></div><div><fit-text w="97">Satellite</fit-text></div>');
define('map-controls', `:host{display:flex;flex-direction:column;gap:48px;grid-area:1/1;justify-self:end;z-index:1;margin:260px 15px 0 0}
  div{width:60px;height:60px;background:#fff;border-radius:3px;box-shadow:0 1px 4px rgba(0,0,0,.3);display:flex;justify-content:center;align-items:center;flex:none}
  .zoom{height:121px;flex-direction:column;justify-content:flex-start} .zoom svg{margin:16px 0 16px} hr{width:45px;margin:0;border:0;border-top:1px solid #e2e2e2}`,
  `<div><svg width="26" height="46" viewBox="0 0 26 46" style="margin-right:2px"><g stroke="#755f3b" stroke-width="1" fill="#fbb929"><path d="M7 15.500h12l3 3 3 17-3.500 1-2.500-8-1 16.500h-4.300L13 33l-.7 12H8L7 28.500l-2.500 8-3.500-1 3-17z"/><circle cx="13" cy="8" r="7.200"/></g><path d="M9 15.800h8L13 24z" fill="#e0823c"/></svg></div>
   <div class="zoom"><svg width="28" height="28"><path d="M14 0v28M0 14h28" stroke="#666" stroke-width="5.500"/></svg><hr></div>`);
define('zone-map', ':host{display:grid;width:2049px;height:436px;overflow:hidden;align-items:start;margin-top:22px}', '<map-canvas></map-canvas><map-type></map-type><map-controls></map-controls>');

/* ---------- dialog ---------- */
define('scroll-rail', `:host{display:flex;flex-direction:column;align-items:center;width:25px;height:677px;margin-top:36px;background:#f1f1f1;flex:none}
  i{width:21px;height:541px;background:#c1c1c1;flex:none} svg{flex:none;display:block}`,
  '<svg width="25" height="25"><path d="M7 16 12.500 10 18 16z" fill="#a3a3a3"/></svg><i></i><svg width="25" height="25" style="margin-top:86px"><path d="M7 10h11L12.500 16z" fill="#505050"/></svg>');
define('status-row', `:host{display:flex;justify-content:flex-end;height:41px;margin-top:8px;color:#555b63}
  .label{margin:0;line-height:24px} .label fit-text{font-size:20.500px}
  .switch{width:63px;height:36px;border-radius:18px;background:${GREEN};padding:5px 6px 0 0;display:flex;justify-content:flex-end} .switch i{width:26px;height:26px;border-radius:50%;background:#fff}
  solid-button{width:104px;height:41px;border-radius:0;margin-left:1px;font-weight:400;font-size:21px}`,
  '<div class="label"><fit-text w="147">Change Status</fit-text></div><div class="switch"><i></i></div><solid-button><fit-text w="74">Update</fit-text></solid-button>');
define('zone-caption', `:host{display:flex;height:102px;background:#fafafa;border:1px solid #e6e6e6;border-left-color:#f4f4f4;border-right-color:#f4f4f4;border-radius:7px;padding:31px 0 0 21px}
  div{height:46px;border-bottom:4px solid ${GREEN};font:400 35px "DejaVu Sans Mono",monospace;color:#777} fit-text{line-height:38px}`,
  '<div><fit-text w="343">Zone Number : 95</fit-text></div>');
define('zone-dialog', `:host{display:flex;position:absolute;left:22px;top:551px;width:2116px;height:713px;background:#fff;border-radius:9px 9px 0 0;overflow:visible;box-shadow:0 11px 15px -7px rgba(0,0,0,.2),0 24px 38px 3px rgba(0,0,0,.14),0 9px 46px 8px rgba(0,0,0,.14)}
  main{width:2091px;padding:36px 21px 0;overflow:hidden;position:relative} tab-strip{height:68px;margin-left:737px}
  .close{position:absolute;left:2035px;top:17px;width:42px;height:42px;border-radius:8px}`,
  `<main><tab-strip tabs='[["Zone info",88,178],["Zone Fare Setting",171,262],["Map",44,134,1]]'></tab-strip>
   <solid-button class="close"><ui-icon name="x"></ui-icon></solid-button>
   <status-row></status-row><zone-caption></zone-caption><zone-map></zone-map></main><scroll-rail></scroll-rail>`);

define('spider-app', `:host{display:block;position:relative;width:2160px;height:1266px;overflow:hidden}
  .page{display:flex;gap:12px;padding-left:9px;height:1266px} .veil{position:absolute;inset:0;background:rgba(0,0,0,.4)}
  .edge{position:absolute;left:0;right:0;bottom:0;height:2px;background:#464646}`,
  `<div class="page"><side-nav></side-nav><div><top-bar></top-bar><zone-page></zone-page></div></div><div class="veil"></div><zone-dialog></zone-dialog><div class="edge"></div>`);
</script>
</body>
</html>
